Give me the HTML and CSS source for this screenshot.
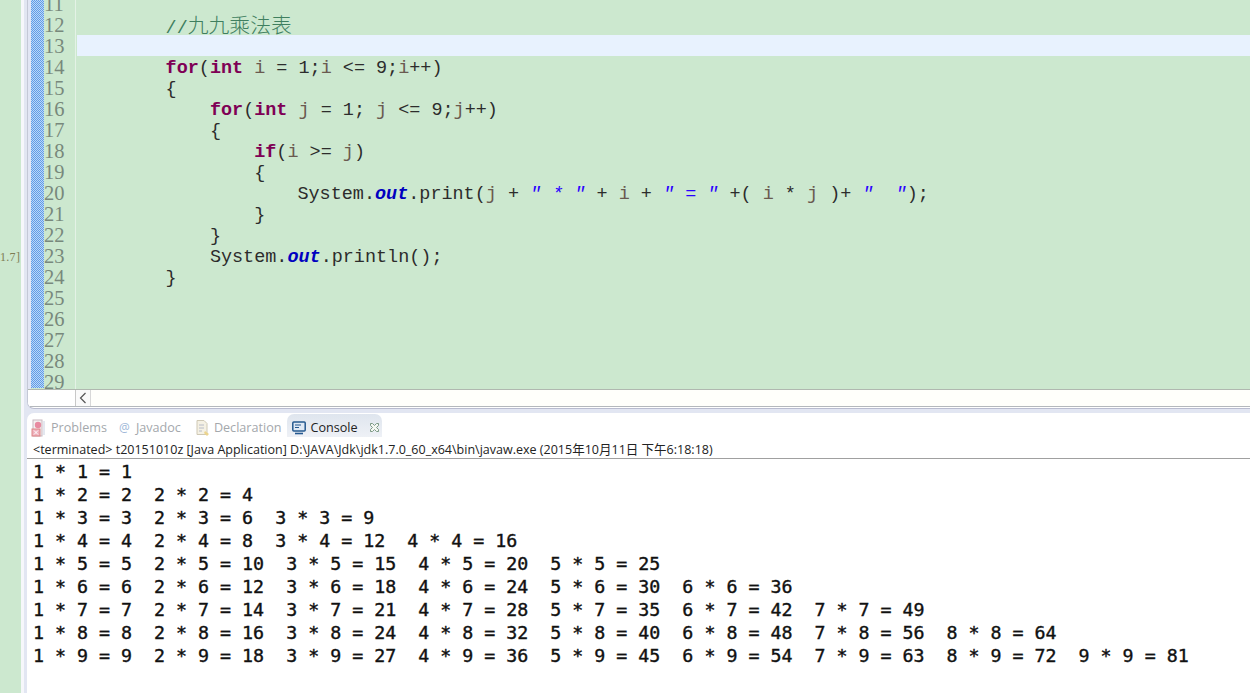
FILE: index.html
```html
<!DOCTYPE html>
<html lang="zh">
<head>
<meta charset="utf-8">
<title>t20151010z - Eclipse</title>
<link rel="stylesheet" href="styles.css">
</head>
<body>
<div class="app">
  <aside class="side"><span class="side-label">1.7]</span></aside>
  <main class="main">
    <section class="editor">
      <div class="editor-body">
        <div class="ruler"></div>
        <div class="checker"></div>
        <div class="numbers">
          <div>11</div><div>12</div><div>13</div><div>14</div><div>15</div><div>16</div><div>17</div><div>18</div><div>19</div><div>20</div><div>21</div><div>22</div><div>23</div><div>24</div><div>25</div><div>26</div><div>27</div><div>28</div><div>29</div>
        </div>
        <div class="code">
          <div class="line"> </div>
          <div class="line line-c">        <span class="cm">//<span class="cjk">九九乘法表</span></span></div>
          <div class="line current"> </div>
          <div class="line">        <b class="kw">for</b>(<b class="kw">int</b> <span class="v">i</span> = 1;<span class="v">i</span> &lt;= 9;<span class="v">i</span>++)</div>
          <div class="line">        {</div>
          <div class="line">            <b class="kw">for</b>(<b class="kw">int</b> <span class="v">j</span> = 1; <span class="v">j</span> &lt;= 9;<span class="v">j</span>++)</div>
          <div class="line">            {</div>
          <div class="line">                <b class="kw">if</b>(<span class="v">i</span> &gt;= <span class="v">j</span>)</div>
          <div class="line">                {</div>
          <div class="line sys-a">                    System.<b class="fld">out</b>.print(<span class="v">j</span> + <i class="str">" * "</i> + <span class="v">i</span> + <i class="str">" = "</i> +( <span class="v">i</span> * <span class="v">j</span> )+ <i class="str">"  "</i>);</div>
          <div class="line">                }</div>
          <div class="line">            }</div>
          <div class="line">            System.<b class="fld">out</b>.println();</div>
          <div class="line">        }</div>
        </div>
      </div>
      <div class="hscroll">
        <div class="hscroll-pad"></div>
        <div class="arrow"><svg width="8" height="12" viewBox="0 0 8 12"><path d="M6.5 1 L1.5 6 L6.5 11" fill="none" stroke="#555" stroke-width="1.2"/></svg></div>
      </div>
    </section>
    <section class="panel">
      <div class="tabs">
        <div class="tab"><svg class="ico" width="17" height="18" viewBox="0 0 17 18"><rect x="2" y="1" width="9" height="16" fill="#f4f0f0" stroke="#c8b8c0"/><circle cx="7" cy="6" r="3.2" fill="#e88aa0"/><rect x="1" y="10" width="8" height="7" fill="#eeb0bc" stroke="#d88"/><path d="M3 11.5l4 4M7 11.5l-4 4" stroke="#fff" stroke-width="1"/><path d="M13 2v14" stroke="#c9d0e0"/></svg><span>Problems</span></div>
        <div class="tab tab-j"><span class="at">@</span><span>Javadoc</span></div>
        <div class="tab tab-d"><svg class="ico" width="16" height="18" viewBox="0 0 16 18"><path d="M2 1.5h7l3 3v11H2z" fill="#f5f1e4" stroke="#cfc8b4"/><path d="M4 6h5M4 9h5M4 12h3" stroke="#b8bcc8"/><path d="M10 12l4 3-2 2-3-3z" fill="#ecd48c"/></svg><span>Declaration</span></div>
        <div class="tab active"><svg class="ico" width="14" height="14" viewBox="0 0 14 14"><rect x="0.8" y="1" width="12.4" height="9" rx="1" fill="#dfe9f5" stroke="#25598f" stroke-width="1.5"/><path d="M3 4h6M3 6.5h4" stroke="#25598f"/><path d="M3 12.5h8" stroke="#25598f" stroke-width="1.6"/></svg><span>Console</span><svg class="close" width="11" height="11" viewBox="0 0 11 11"><path d="M1.5 1.5h2L5.500 3.500 7.500 1.500h2v2L7.500 5.500l2 2v2h-2L5.500 7.500l-2 2h-2v-2l2-2-2-2z" fill="#f4f7f2" stroke="#7d9a86"/></svg></div>
      </div>
      <div class="status">&lt;terminated&gt; t20151010z [Java Application] D:\JAVA\Jdk\jdk1.7.0_60_x64\bin\javaw.exe (2015年10月11日 下午6:18:18)</div>
      <pre class="console">1 * 1 = 1  
1 * 2 = 2  2 * 2 = 4  
1 * 3 = 3  2 * 3 = 6  3 * 3 = 9  
1 * 4 = 4  2 * 4 = 8  3 * 4 = 12  4 * 4 = 16  
1 * 5 = 5  2 * 5 = 10  3 * 5 = 15  4 * 5 = 20  5 * 5 = 25  
1 * 6 = 6  2 * 6 = 12  3 * 6 = 18  4 * 6 = 24  5 * 6 = 30  6 * 6 = 36  
1 * 7 = 7  2 * 7 = 14  3 * 7 = 21  4 * 7 = 28  5 * 7 = 35  6 * 7 = 42  7 * 7 = 49  
1 * 8 = 8  2 * 8 = 16  3 * 8 = 24  4 * 8 = 32  5 * 8 = 40  6 * 8 = 48  7 * 8 = 56  8 * 8 = 64  
1 * 9 = 9  2 * 9 = 18  3 * 9 = 27  4 * 9 = 36  5 * 9 = 45  6 * 9 = 54  7 * 9 = 63  8 * 9 = 72  9 * 9 = 81  </pre>
    </section>
  </main>
</div>
</body>
</html>
```
FILE: styles.css
```css
* { box-sizing: border-box; }
html, body { margin: 0; height: 100%; overflow: hidden; }
body { background: #fff; }

.app { display: flex; width: 1250px; height: 693px; }

.side {
  width: 21px;
  flex: none;
  background: #cce8cf;
  padding-top: 250px;
  font: 12px/15px "Liberation Serif", serif;
  color: #7c7c54;
}
.side-label { display: block; letter-spacing: 0.3px; }

.main {
  flex: 1;
  min-width: 0;
  display: flex;
  flex-direction: column;
  background: #e2e6f2;
  padding-left: 6px;
  border-left: 3px solid #f6f7fb;
}

.editor {
  height: 409px;
  flex: none;
  display: flex;
  flex-direction: column;
  background: #fff;
  border-bottom: 1px solid #b9bccf;
  border-left: 1px solid #c4c8d6;
  border-bottom-left-radius: 7px;
  overflow: hidden;
  margin-left: -3px;
}

.editor-body {
  height: 390px;
  flex: none;
  display: flex;
  overflow: hidden;
  background: #cce8cf;
  border-bottom: 1px solid #b0b8b0;
}

.ruler { width: 3px; flex: none; background: #e2e6f4; }

.checker {
  width: 13px;
  flex: none;
  background-color: #ffffff;
  background-image: repeating-conic-gradient(#5f9be8 0 25%, #bcd8f6 0 50%);
  background-size: 2px 2px;
  margin-bottom: 1px;
}

.numbers {
  width: 32px;
  flex: none;
  margin-top: -6px;
  font: 20.5px/21px "Liberation Serif", serif;
  color: #78887c;
  border-right: 1px solid #e4f2e6;
}

.code {
  flex: 1;
  min-width: 0;
  margin-top: -7px;
  padding-left: 1px;
  font: 18.47px/21px "Liberation Mono", monospace;
  color: #2c2c2c;
}

.line { height: 21px; padding-top: 2px; white-space: pre; }
.line-c { padding-top: 0; }
.current { background: #e8f2fe; }
.sys-a { margin-left: -1px; }
.kw { color: #7f0055; font-weight: 700; }
.v { color: #6a5a50; }
.cm { color: #3f7f5f; }
.cjk { font-family: "Noto Sans CJK SC", sans-serif; font-size: 20.8px; font-weight: 300; }
.fld { color: #0000c0; font-style: italic; font-weight: 700; }
.str { color: #2a00ff; font-style: italic; }

.hscroll {
  height: 17px;
  flex: none;
  display: flex;
  background: #fffffb;
  border-bottom: 1px solid #b4b8bc;
}
.hscroll-pad { width: 47px; flex: none; background: #fff; }
.arrow {
  width: 16px;
  flex: none;
  display: flex;
  align-items: center;
  justify-content: center;
  background: #fafafa;
  border-left: 1px solid #c8c8c8;
  border-right: 1px solid #d8d8d8;
}

.panel {
  flex: 1;
  min-height: 0;
  margin: 4px 0 0 -3px;
  background: #fff;
  border-top-left-radius: 7px;
  display: flex;
  flex-direction: column;
}

.tabs {
  height: 24px;
  flex: none;
  display: flex;
  padding: 1px 0 0 4px;
  align-items: stretch;
  font: 12.6px/20px "Open Sans", "Noto Sans", sans-serif;
  color: #a4a8ac;
}
.tab { display: flex; align-items: center; gap: 3px; padding-top: 4px; }
.tab-j { margin-left: 12px; gap: 5px; }
.tab-d { margin-left: 14px; gap: 3px; }
.at { font-size: 12px; color: #9fb8d8; width: 12px; }
.ico { flex: none; }
.active {
  margin-left: 6px;
  width: 95px;
  padding-left: 5px;
  color: #222;
  gap: 4px;
  background: linear-gradient(#dfe5ee, #eef1f6);
  border-radius: 7px 7px 0 0;
}
.close { margin-left: 7px; flex: none; }

.status {
  height: 22px;
  flex: none;
  padding: 3px 0 0 6px;
  font: 12.53px/19px "Open Sans", "Noto Sans", "Noto Sans CJK SC", sans-serif;
  color: #222;
  border-bottom: 1px solid #a0a0a0;
  white-space: nowrap;
}

.console {
  margin: 0;
  padding: 1px 0 0 6px;
  font: 400 18.29px/23px "DejaVu Sans Mono", monospace;
  -webkit-text-stroke: 0.4px #111;
  color: #111;
  white-space: pre;
}
```
